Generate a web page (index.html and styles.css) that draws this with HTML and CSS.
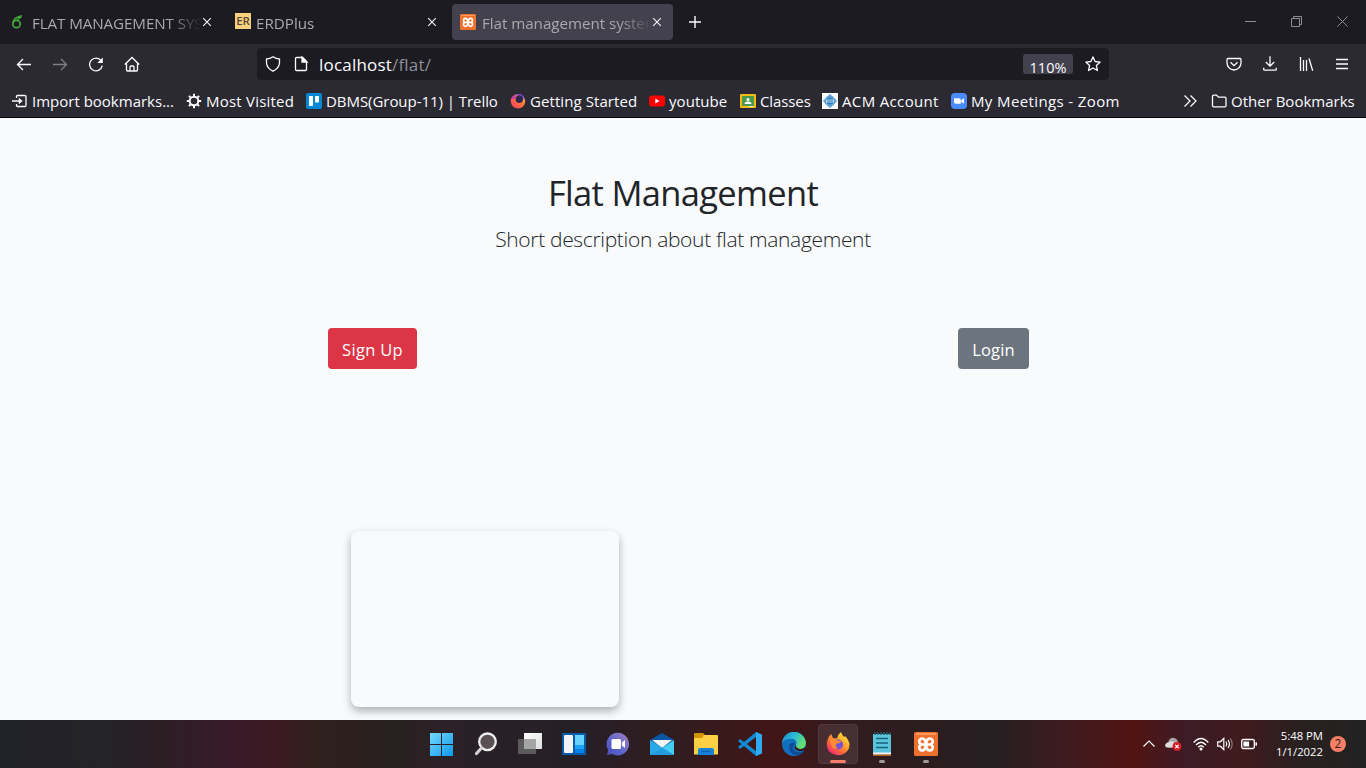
FILE: index.html
```html
<!DOCTYPE html>
<html lang="en">
<head>
<meta charset="utf-8">
<title>Flat management system</title>
<link rel="stylesheet" href="styles.css">
</head>
<body>
<div class="screen">
<header class="browser">
  <div class="tabs">
    <div class="tab">
      <svg class="i16" viewBox="0 0 16 16" fill="none" stroke="#46a83c"><circle cx="5.500" cy="10" r="3.700" stroke-width="1.700"/><path d="M2 9C2 4.500 6 2.500 11 1.600M5 4.300q3-1.800 5.500-1M6 6.200q2-1.800 3.800-2.700" stroke-width="1.300"/></svg>
      <span class="tab-label t-flat">FLAT MANAGEMENT SYSTEM</span>
      <svg class="close" viewBox="0 0 10 10"><path d="M1.2 1.2l7.6 7.6M8.8 1.2L1.2 8.8"/></svg>
    </div>
    <div class="tab second">
      <span class="er">ER</span>
      <span class="tab-label t-erd">ERDPlus</span>
      <svg class="close" viewBox="0 0 10 10"><path d="M1.2 1.2l7.6 7.6M8.8 1.2L1.2 8.8"/></svg>
    </div>
    <div class="tab active">
      <svg class="i16" viewBox="0 0 24 24"><use href="#xampp"/></svg>
      <span class="tab-label t-sys">Flat management system</span>
      <svg class="close" viewBox="0 0 10 10"><path d="M1.2 1.2l7.6 7.6M8.8 1.2L1.2 8.8"/></svg>
    </div>
    <svg class="plus" viewBox="0 0 12 12"><path d="M6 0v12M0 6h12" stroke="#fbfbfe" stroke-width="1.4"/></svg>
    <div class="window-controls">
      <svg viewBox="0 0 11 11"><path d="M0 5.5h11"/></svg>
      <svg viewBox="0 0 11 11"><path d="M.5 2.5h8v8h-8zM2.5 2.5v-2h8v8h-2"/></svg>
      <svg viewBox="0 0 11 11"><path d="M.5.5l10 10M10.5.5l-10 10"/></svg>
    </div>
  </div>
  <div class="nav">
    <div class="nav-buttons">
      <svg class="line" viewBox="0 0 16 16"><path d="M15 8.500H1.500M7 3L1.500 8.500 7 14"/></svg>
      <svg class="line dim" viewBox="0 0 16 16"><path d="M1 8.500h13.500M9 3L14.500 8.500 9 14"/></svg>
      <svg class="line" viewBox="0 0 16 16"><path d="M14.300 9.700A6.400 6.400 0 1 1 13.200 4.700"/><path d="M14.800 1.500V7H9.300z" fill="#fbfbfe" stroke="none"/></svg>
      <svg class="line" viewBox="0 0 16 16"><path d="M.8 8.500L8 1.500l7.200 7M2.500 7.500v6.500q0 1 1 1h9q1 0 1-1V7.500M6 15V11q0-1 1-1h2q1 0 1 1v4"/></svg>
    </div>
    <div class="urlbar">
      <svg class="line" viewBox="0 0 16 16"><path d="M8 .8q3 2 6.500 2.200v4Q14 12.500 8 15.200 2 12.500 1.500 7V3Q5 2.800 8 .8z"/></svg>
      <svg class="line page-icon" viewBox="0 0 16 16"><path d="M3.500 1.500h6l4 4v8q0 1-1 1h-9q-1 0-1-1v-11q0-1 1-1z"/><path d="M9 1v5h5z" fill="#fbfbfe"/></svg>
      <span class="url">localhost<span class="path">/flat/</span></span>
      <span class="zoom">110%</span>
      <svg class="line" viewBox="0 0 16 16"><path d="M8 .9l2.100 4.600 5.100.6-3.800 3.400 1 5L8 12l-4.400 2.500 1-5L.8 6.100l5.100-.6z" stroke-linejoin="round"/></svg>
    </div>
    <div class="tools">
      <svg class="line" viewBox="0 0 16 16"><path d="M2 2.500h12q1 0 1 1V7q-.3 6-7 7-6.700-1-7-7V3.500q0-1 1-1zM4.500 6.300L8 9.700l3.500-3.400"/></svg>
      <svg class="line" viewBox="0 0 16 16"><path d="M8 .2V10M3.800 6L8 10.200 12.200 6M1.700 11.700v1.500q0 1 1 1h10.600q1 0 1-1v-1.500"/></svg>
      <svg class="line" viewBox="0 0 16 16"><path d="M2.500 1v14M5.500 4v11M8.500 4v11M11 2.500l3.700 12.300"/></svg>
      <svg class="line" viewBox="0 0 16 16"><path d="M2 3.500h12M2 8h12M2 12.500h12"/></svg>
    </div>
  </div>
  <div class="bookmarks">
    <div class="bm b1"><svg class="line" viewBox="0 0 16 16"><path d="M4.500 5V3.500q0-1 1-1H13q1 0 1 1v9q0 1-1 1H5.500q-1 0-1-1V11M0 8h8"/><path d="M7 5.200l3.300 2.800L7 10.800z" fill="#fbfbfe" stroke-width=".6"/></svg><span>Import bookmarks...</span></div>
    <div class="bm b2"><svg class="i16" viewBox="0 0 16 16" fill="none" stroke="#fbfbfe"><circle cx="8" cy="8" r="4.300" stroke-width="2"/><path d="M8 .8v3M8 12.200v3M.8 8h3M12.200 8h3M2.900 2.900L5 5M11 11l2.100 2.100M2.900 13.100L5 11M11 5l2.100-2.100" stroke-width="2"/></svg><span>Most Visited</span></div>
    <div class="bm b3"><svg class="i16" viewBox="0 0 16 16"><rect width="16" height="16" rx="2" fill="#0388d8"/><rect x="3" y="3" width="4" height="10" rx=".7" fill="#fff"/><rect x="9" y="3" width="4" height="6.500" rx=".7" fill="#fff"/></svg><span>DBMS(Group-11) | Trello</span></div>
    <div class="bm b4"><svg class="i16" viewBox="0 0 16 16"><defs><linearGradient id="fxs" x1="0" x2="1" y1="1" y2="0"><stop offset="0" stop-color="#ff3767"/><stop offset=".55" stop-color="#ff7139"/><stop offset="1" stop-color="#ffd54a"/></linearGradient></defs><circle cx="8" cy="8.300" r="7.200" fill="url(#fxs)"/><path d="M5 2Q9-.5 13 3q2 2 2.200 5Q13 3.500 9 3z" fill="#7542e5"/><circle cx="9.300" cy="6.200" r="3.700" fill="#2b2550"/><path d="M1 5.500q2-3.500 5-3.500L5 6z" fill="#c33bb8"/></svg><span>Getting Started</span></div>
    <div class="bm b5"><svg class="i16" viewBox="0 0 16 16"><rect x="0" y="2.500" width="16" height="11" rx="3" fill="#f00"/><path d="M6.300 5.500v5l4.300-2.500z" fill="#fff"/></svg><span>youtube</span></div>
    <div class="bm b6"><svg class="i16" viewBox="0 0 16 16"><rect y="1" width="16" height="14" rx="1" fill="#f5ba14"/><rect x="2" y="3" width="12" height="10" fill="#4b9a4c"/><circle cx="8" cy="6.500" r="1.500" fill="#fff"/><path d="M4.500 11q0-2.500 3.500-2.500t3.500 2.500z" fill="#fff"/><path d="M9 13h4v1H9z" fill="#eee"/></svg><span>Classes</span></div>
    <div class="bm b7"><svg class="i16" viewBox="0 0 16 16"><path d="M0 0h16v16H0z" fill="#fff"/><path d="M8 .8L15.200 8 8 15.200.8 8z" fill="#6ba7d8"/><circle cx="8" cy="8" r="5" fill="#2e7dbb"/><circle cx="8" cy="8" r="4.100" fill="none" stroke="#9bd0ee" stroke-width=".7"/><path d="M4 6.500h8v3H4z" fill="#b9ddf2"/><path d="M5 8h6" stroke="#287ab9"/></svg><span>ACM Account</span></div>
    <div class="bm b8"><svg class="i16" viewBox="0 0 16 16"><rect width="16" height="16" rx="4" fill="#4a8cff"/><path d="M3 5.300h5q1.800 0 1.800 1.700v3.700H4.700Q3 10.700 3 9zM10.300 7l2.700-1.700v5.400L10.300 9z" fill="#fff"/></svg><span>My Meetings - Zoom</span></div>
    <svg class="line more" viewBox="0 0 16 16"><path d="M2.500 2.500L8 8l-5.500 5.500M8.500 2.500L14 8l-5.500 5.500"/></svg>
    <div class="bm b9"><svg class="line" viewBox="0 0 16 16"><path d="M1.500 12.800V3.200q0-1 1-1h3l2 2H14q1 0 1 1v7.600q0 1-1 1H2.500q-1 0-1-1z"/></svg><span>Other Bookmarks</span></div>
  </div>
</header>
<main class="page">
  <h1>Flat Management</h1>
  <p class="lead">Short description about flat management</p>
  <div class="actions"><button class="btn signup"><span>Sign Up</span></button><button class="btn login"><span>Login</span></button></div>
  <div class="card"></div>
</main>
<footer class="taskbar">
  <div class="apps">
    <div class="app"><svg viewBox="0 0 24 24"><defs><linearGradient id="win" gradientUnits="userSpaceOnUse" x1="0" y1="0" x2="24" y2="24"><stop stop-color="#77dcfc"/><stop offset="1" stop-color="#0a96ef"/></linearGradient></defs><path d="M0 1h11v11H0zM12 1h11v11H12zM0 13h11v11H0zM12 13h11v11H12z" fill="url(#win)"/></svg></div>
    <div class="app"><svg viewBox="0 0 24 24"><circle cx="13.500" cy="9.800" r="8.300" fill="#5a5053" stroke="#eee" stroke-width="2.300"/><path d="M7.500 16L2.500 21.500" stroke="#d4d2d3" stroke-width="3.200" stroke-linecap="round"/></svg></div>
    <div class="app"><svg viewBox="0 0 24 24"><defs><linearGradient id="gw" x2="1" y2="1"><stop stop-color="#fff"/><stop offset="1" stop-color="#ddd"/></linearGradient></defs><path d="M6 1h18v16H6z" fill="url(#gw)"/><path d="M0 7h18v15H0z" fill="#5c5a5b"/><path d="M6 7h12v10H6z" fill="#a5a4a5"/></svg></div>
    <div class="app"><svg viewBox="0 0 24 24"><path d="M0 1h24v22H0z" fill="#075ba9"/><rect x="2" y="3" width="9" height="18" rx="1" fill="#f3f4f6"/><path d="M13 3h9v10h-9z" fill="#65d3fb"/><path d="M13 13h9v4h-9z" fill="#1ba4f4"/><path d="M13 17h9v4h-9z" fill="#0585eb"/></svg></div>
    <div class="app"><svg viewBox="0 0 24 24"><defs><linearGradient id="chat" x1="1" x2="0" y2="1"><stop stop-color="#a580ba"/><stop offset=".6" stop-color="#5865ce"/><stop offset="1" stop-color="#4a4bb5"/></linearGradient></defs><path d="M12 .8A11.300 11.300 0 1 1 6.300 22L1 23l1.200-5A11.300 11.300 0 0 1 12 .8z" fill="url(#chat)"/><rect x="5.500" y="7" width="9.500" height="10" rx="1.500" fill="#fff"/><path d="M16 10.500L19 8v8l-3-2.500z" fill="#fff"/></svg></div>
    <div class="app"><svg viewBox="0 0 24 24"><path d="M0 8L12 1l12 7-12 9z" fill="#0a56a3"/><path d="M2 8h20l-10 8z" fill="#f4f4f4"/><path d="M0 8l24 15H0z" fill="#29a9e7"/><path d="M24 8v15L12 16z" fill="#43cdf3"/><path d="M0 23l12-7 12 7z" fill="#229bdf"/></svg></div>
    <div class="app"><svg viewBox="0 0 24 24"><path d="M0 2q0-1 1-1h8l2 2-2 4H0z" fill="#d59306"/><path d="M0 6h8l2-3h13q1 0 1 1v18.500H0z" fill="#fccf45"/><path d="M4 23v-5q0-2 2-2h12q2 0 2 2v5z" fill="#1783d8"/><path d="M7.500 19.500h9" stroke="#0d5fac" stroke-width="1.300"/></svg></div>
    <div class="app"><svg viewBox="0 0 24 24"><path d="M18 0l6 2.800v18.400L18 24 0 9l2-2 16 12V5L2 17l-2-2z" fill="#118ad4"/><path d="M18 0l6 2.800v18.400L18 24z" fill="#32aaf1"/></svg></div>
    <div class="app"><svg viewBox="0 0 24 24"><defs><linearGradient id="edge" x2="1" y2=".5"><stop stop-color="#1688c9"/><stop offset=".5" stop-color="#29bad9"/><stop offset="1" stop-color="#65df6b"/></linearGradient></defs><circle cx="12" cy="12" r="12" fill="#126fc0"/><path d="M0 11C2-1.500 15-3 21 4c5 6 3 13-3 13-4 0-5-2-4-4 2-4-2-7-6-6-4 0-7 2-8 4z" fill="url(#edge)"/><path d="M8 12c-3 6 2 12 8 11 3-.5 5-2 6-4-5 2-11 1-11-4q0-2 2-3-1-3-5 0z" fill="#0c4e96"/><path d="M13.500 12.500q-2.500 5 3.500 6.500 4 .5 6.500-1.500l.5-3q-3 3-6 2.500-4-.5-4.500-4.500z" fill="#371719"/></svg></div>
    <div class="app active"><svg viewBox="0 0 24 24"><defs><linearGradient id="fox" x1="1" y1="0" x2=".2" y2="1"><stop stop-color="#fff44f"/><stop offset=".35" stop-color="#ffb72c"/><stop offset=".7" stop-color="#ff673c"/><stop offset="1" stop-color="#ed247d"/></linearGradient></defs><path d="M1 14Q0 8 5 2l2 4 4 .5Q12 2 15 0q1 3 3 5l1-1q7 7 3 14-4 6-11 5-9-1-10-9z" fill="url(#fox)"/><circle cx="12" cy="12.500" r="5" fill="#7551d6"/><path d="M3.500 7.500q5-2 8 1l4 .5q-2 3-5 2.500-2 3 1.500 4.500-4 2-6-1z" fill="#ff8b34"/></svg><i class="running wide"></i></div>
    <div class="app"><svg viewBox="0 0 24 24"><path d="M3 2h18v21H3z" fill="#5ac4dc"/><path d="M3 20.500h18v2H3z" fill="#f5f2ed"/><path d="M3 22.500h18V24H3z" fill="#b65d19"/><path d="M5 0v3M8 0v3M11 0v3M14 0v3M17 0v3M20 0v3" stroke="#24616f" stroke-width="1.500"/><path d="M6 6.500h12M6 11h12M6 15.500h12" stroke="#176479" stroke-width="1.500"/></svg><i class="running"></i></div>
    <div class="app"><svg viewBox="0 0 24 24"><g id="xampp"><rect width="24" height="24" rx="1.500" fill="#ed702c"/><path d="M2 2h20" stroke="#ffad77" stroke-width="1.300"/><path d="M11 12.500H8.200a3 3 0 1 1 2.600-4.500L12 11.500 13.200 8a3 3 0 1 1 2.600 4.500H13M8.200 12.500a3 3 0 1 0 2.600 4.500l1.200-3.500 1.200 3.500a3 3 0 1 0 2.600-4.500" fill="none" stroke="#fff" stroke-width="2.700" stroke-linejoin="round"/></g></svg><i class="running"></i></div>
  </div>
  <div class="tray">
    <svg class="chev" viewBox="0 0 12 12"><path d="M.5 8.500L6 3l5.500 5.500"/></svg>
    <svg class="cloud" viewBox="0 0 17 14"><path d="M3.500 10.500a3.500 3.500 0 0 1 0-6Q5 0 9 1q3 .5 4 4 3 1 2 5.500z" fill="#aaa6a8" stroke="none"/><path d="M0 8q1-3 4-2.500 2-2.500 5 0v5H2Q0 10 0 8z" fill="#ddd" stroke="none"/><circle cx="12" cy="9.500" r="4.500" fill="#d71d2b" stroke="none"/><path d="M10.300 7.800l3.400 3.400M13.700 7.800l-3.400 3.400"/></svg>
    <svg class="wifi" viewBox="0 0 16 14"><path d="M.7 5.500q7.300-8 14.600 0M3 8q5-5.500 10 0M5.300 10.300q2.700-3 5.400 0" stroke-width="1.400"/><circle cx="8" cy="12" r="1.500" fill="#fff" stroke="none"/></svg>
    <svg class="sound" viewBox="0 0 16 14"><path d="M.7 4.800h2.600l3.500-3.300v11L3.300 9.200H.7zM9 4.700q1.600 2.300 0 4.600M11 3q3 4 0 8"/><path d="M13.200 1.300q4 5.700 0 11.400" stroke="#847a7b"/></svg>
    <svg class="battery" viewBox="0 0 16 12"><rect x=".7" y="1.500" width="12.600" height="9" rx="1.500" stroke-width="1.300"/><path d="M3 4h4.500v4H3z" fill="#fff"/><path d="M15.200 4.300v3.400" stroke-width="1.500"/></svg>
    <div class="clock"><span>5:48 PM</span><span>1/1/2022</span></div>
    <span class="badge">2</span>
  </div>
</footer>
</div>
</body>
</html>
```
FILE: styles.css
```css
* { box-sizing: border-box; }
body { margin: 0; font-family: "Open Sans", "Noto Sans", sans-serif; }
.screen { width: 1366px; height: 768px; overflow: hidden; display: flex; flex-direction: column; background: #f8fafc; }
.i16, .line { width: 16px; height: 16px; flex: none; }
.line { fill: none; stroke: #fbfbfe; stroke-width: 1.3; }
.dim { opacity: .4; }

.browser { height: 118px; flex: none; background: #2b2a33; border-bottom: 1px solid #08080c; color: #fbfbfe; }
.tabs { height: 44px; padding: 4px 0 0 3px; background: #1c1b22; display: flex; }
.tab { width: 221px; height: 36px; margin-right: 4px; padding: 0 9px 0 8px; border-radius: 4px; display: flex; align-items: center; flex: none; font-size: 15.2px; color: #a9a8ad; }
.tab.second { padding-left: 7px; margin-right: 3px; }
.second .close { margin-left: 1px; }
.tab.active { background: #42414d; }
.tab-label { width: 170px; margin-left: 5px; height: 24px; line-height: 26px; overflow: hidden; white-space: nowrap; mask-image: linear-gradient(90deg, #000 80%, transparent); flex: none; }
.t-flat { letter-spacing: -.1px; }
.t-sys { letter-spacing: -.05px; }
.active .tab-label { margin-left: 6px; }
.close { width: 10px; height: 10px; flex: none; stroke: #eeedf2; stroke-width: 1.2; }
.er { width: 16px; height: 16px; margin-top: -2px; background: #f6d07c; color: #594536; font: 600 11.500px/16px "Open Sans", sans-serif; text-align: center; flex: none; letter-spacing: -.2px; }
.plus { width: 12px; height: 12px; margin: 12px 0 0 12px; flex: none; }
.window-controls { display: flex; gap: 35px; margin: 12px 18px 0 auto; }
.window-controls svg { width: 11px; height: 11px; fill: none; stroke: #8d8c92; }

.nav { height: 40px; display: flex; align-items: center; }
.nav-buttons { display: flex; gap: 20px; width: 257px; padding-left: 16px; }
.urlbar { width: 852px; height: 32px; border-radius: 4px; background: #1c1b22; display: flex; align-items: center; padding: 0 8px; }
.page-icon { margin-left: 12px; }
.url { font-size: 17px; margin-left: 10px; line-height: 32px; padding-top: 2px; letter-spacing: .2px; }
.path { color: #8e8d94; }
.zoom { width: 50px; height: 20px; margin: 0 12px 0 auto; border-radius: 3px; overflow: hidden; text-align: center; background: #42414d; font-size: 14.500px; line-height: 28px; }
.tools { display: flex; gap: 20px; margin-left: auto; padding-right: 16px; }

.bookmarks { height: 33px; display: flex; align-items: center; padding: 1px 0 0 12px; font-size: 15px; }
.bm { display: flex; align-items: center; gap: 4px; white-space: nowrap; flex: none; }
.bm span { line-height: 22px; margin-top: -1px; }
.b1 { width: 174px; }
.b2 { width: 120px; letter-spacing: .22px; }
.b3 { width: 204px; letter-spacing: -.05px; }
.b4 { width: 139px; letter-spacing: .08px; }
.b5 { width: 91px; letter-spacing: .05px; }
.b6 { width: 82px; letter-spacing: -.1px; }
.b7 { width: 129px; letter-spacing: .35px; }
.b8 { width: 231px; letter-spacing: .38px; }
.b9 { width: 144px; }
.more { margin-right: 13px; }

.page { height: 602px; display: flex; flex-direction: column; align-items: center; color: #212529; flex: none; }
h1 { margin: 50px 0 0; font-size: 34.500px; font-weight: 400; line-height: 50px; white-space: nowrap; letter-spacing: -.68px; }
.lead { margin: 5px 0 0; font-size: 21px; font-weight: 300; line-height: 32px; white-space: nowrap; letter-spacing: -.33px; }
.actions { width: 701px; margin: 73px 0 0 -9px; display: flex; justify-content: space-between; }
.btn { height: 41px; padding: 1px 0 0; border: 0; border-radius: 4px; color: #fff; font: 16.500px "Open Sans", sans-serif; }
.signup { width: 89px; background: #dc3545; letter-spacing: .3px; }
.login { width: 71px; background: #6c757d; letter-spacing: .1px; }
.card { align-self: flex-start; width: 268px; height: 176px; margin: 162px 0 0 351px; border-radius: 8px; background: #f8fafc; box-shadow: 0 4px 8px rgba(0,0,0,.3); }

.taskbar { height: 48px; flex: none; display: flex; color: #fff; background: linear-gradient(90deg, #22222a 0, #242327 8%, #2d1e24 12%, #391a2a 17%, #3b1920 20%, #2f201c 23%, #28201f 28%, #2b2127 32%, #251f26 42%, #301d20 49%, #421516 57%, #341b1e 61%, #2a1d20 68%, #261f22 73%, #3d1b1e 78%, #511412 83%, #3c1c26 87%, #401a1d 91%, #29201f 95%, #222222 100%); }
.apps { display: flex; gap: 4px; padding: 4px 0 0 422px; }
.app { width: 40px; height: 40px; border-radius: 4px; display: flex; flex-direction: column; align-items: center; padding-top: 8px; }
.app svg { width: 24px; height: 24px; flex: none; }
.app.active { background: rgba(255,255,255,.09); box-shadow: inset 0 0 0 1px rgba(255,255,255,.05); }
.running { width: 6px; height: 3px; margin-top: 4px; border-radius: 2px; background: #a19a9b; }
.running.wide { width: 16px; background: #f77f67; }
.tray { margin-left: auto; padding-right: 20px; display: flex; align-items: center; }
.tray svg { fill: none; stroke: #fff; stroke-width: 1.2; flex: none; }
.chev { width: 12px; height: 12px; margin-right: 10px; }
.cloud { width: 17px; height: 14px; margin-right: 11px; }
.wifi { width: 16px; height: 14px; margin-right: 8px; }
.sound { width: 16px; height: 14px; margin-right: 8px; }
.battery { width: 16px; height: 12px; }
.clock { width: 66px; margin-right: 7px; display: flex; flex-direction: column; align-items: flex-end; font-size: 11.300px; line-height: 16px; white-space: nowrap; }
.badge { width: 16px; height: 16px; border-radius: 50%; background: #f77f67; color: #33201f; font-size: 12px; line-height: 16px; text-align: center; }
```
